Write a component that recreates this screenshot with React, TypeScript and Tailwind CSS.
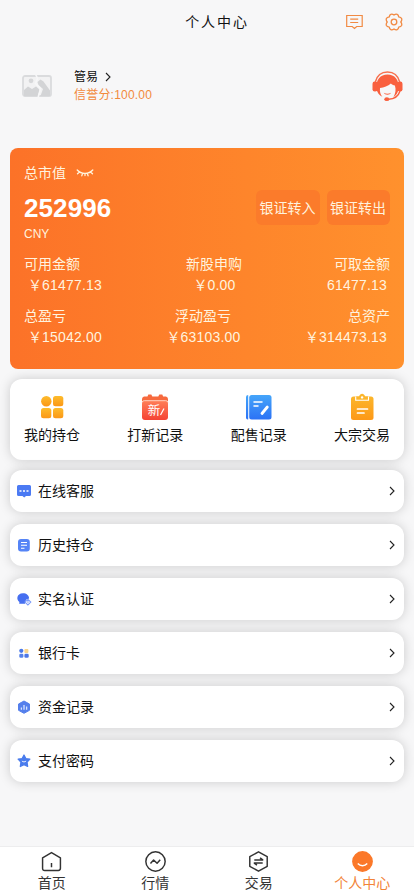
import React from "react";

const Chevron = () => (
  <svg width="6" height="10" viewBox="0 0 6 10" fill="none" stroke="#222" strokeWidth="1.1">
    <path d="M1 1l4 4-4 4" />
  </svg>
);

const EyeClosed = () => (
  <svg width="18" height="10" viewBox="0 0 18 10" fill="none" stroke="#fff3dc" strokeWidth="1.3" strokeLinecap="round">
    <path d="M1.2 2c4 4.400 11.600 4.400 15.600 0M3.200 4.200L1.500 5.800M6.600 5.400L5.800 7.800M11.300 5.400l.8 2.400M14.800 4.200l1.700 1.600M9 5.600v2" />
  </svg>
);

const Agent = () => (
  <svg width="31" height="31" viewBox="0 0 31 31" fill="none">
    <path d="M3.300 11C5 4.500 9.500 1 15.500 1S26 4.500 27.700 11" stroke="#f7714f" strokeWidth="1.500" />
    <path d="M4.500 18C3.500 8.500 8.500 3.500 15.500 3.500S27.500 8.500 26.500 18c-.6 4-2.600 6.500-5 8 2-3.500 2.700-7.500 1.400-11.500-1.700-.2-3-.8-4-2C16 15 12 16.500 8 17c-.5 4 .6 6.500 2.300 8.800C7.300 24.500 5.100 21.500 4.500 18z" fill="#f9603f" />
    <rect x="0.500" y="10.500" width="5" height="10" rx="2.300" fill="#f9603f" />
    <rect x="25.500" y="10.500" width="5" height="10" rx="2.300" fill="#f9603f" />
    <path d="M11.800 21.700c2.300 1.500 5 1.500 7.200 0-.7 2.500-6.300 2.700-7.200 0z" fill="#f9603f" />
    <path d="M28 20c-1.500 5-5.500 8-11.500 8.300" stroke="#f9603f" strokeWidth="1.400" />
    <ellipse cx="14.800" cy="28.200" rx="2.500" ry="1.900" fill="#f9603f" />
  </svg>
);

const GridIcon = () => (
  <svg width="28" height="28" viewBox="0 0 28 28">
    <defs>
      <linearGradient id="amber" x1="0" y1="0" x2="0" y2="1">
        <stop stopColor="#fdbc2c" />
        <stop offset="1" stopColor="#fb9716" />
      </linearGradient>
    </defs>
    <g fill="url(#amber)">
      <circle cx="8.300" cy="8.200" r="5.200" />
      <rect x="15" y="3" width="10.300" height="10.300" rx="2.500" />
      <rect x="3" y="15" width="10.300" height="10.300" rx="2.500" />
      <rect x="15" y="15" width="10.300" height="10.300" rx="2.500" />
    </g>
  </svg>
);

const NewIcon = () => (
  <svg width="28" height="28" viewBox="0 0 28 28">
    <defs>
      <linearGradient id="coral" x1="0" y1="0" x2="0" y2="1">
        <stop stopColor="#ff7f58" />
        <stop offset="1" stopColor="#f54334" />
      </linearGradient>
    </defs>
    <path d="M3 3.500h3.500l.8-2h3l1 2h6l1-2h3l.8 2H25q2 .5 2 2.500v2H1V6q0-2 2-2.500z" fill="#f76a3e" />
    <rect x="1" y="7.500" width="26" height="19.500" rx="3" fill="url(#coral)" />
    <path d="M1.200 9.200q.3-1.500 2-1.500h21.600q1.700 0 2 1.500" fill="none" stroke="#ffd1bf" strokeWidth="1" />
    <text x="13" y="21.800" textAnchor="middle" fontSize="12.500" fill="#fff" fontFamily="'Noto Sans CJK SC', sans-serif">新</text>
    <path d="M19.500 22l3.500-6.500" stroke="#fff" strokeWidth="1.200" />
  </svg>
);

const BookIcon = () => (
  <svg width="28" height="28" viewBox="0 0 28 28">
    <defs>
      <linearGradient id="azure" x1="0" y1="0" x2="0" y2="1">
        <stop stopColor="#45a5fa" />
        <stop offset="1" stopColor="#2b72f5" />
      </linearGradient>
    </defs>
    <path d="M3.200 2v24.500H2.800Q1 26.500 1 24.500V4q0-2 2.200-2z" fill="url(#azure)" />
    <rect x="4.200" y="2" width="22.300" height="24.500" rx="2.500" fill="url(#azure)" />
    <g stroke="#fff" strokeLinecap="round" fill="none">
      <path d="M9 9h8M9 13h4" strokeWidth="1.500" />
      <path d="M17 20.500l5.300-6.500" strokeWidth="2.800" />
    </g>
  </svg>
);

const ClipIcon = () => (
  <svg width="28" height="28" viewBox="0 0 28 28">
    <defs>
      <linearGradient id="amber2" x1="0" y1="0" x2="0" y2="1">
        <stop stopColor="#fcb62b" />
        <stop offset="1" stopColor="#fd9817" />
      </linearGradient>
    </defs>
    <rect x="3" y="3.500" width="22.500" height="23.500" rx="2.500" fill="url(#amber2)" />
    <path d="M7.700 3.500v3.800h12.800V3.500h-3.400c-1-3.800-5-3.800-6 0z" fill="#fcb62b" />
    <path d="M7.700 3.500v3.800h12.800V3.500" fill="none" stroke="#fff" strokeWidth="1.100" />
    <circle cx="14.100" cy="4.400" r="1.200" fill="#fff" />
    <path d="M9.500 16h10M9.500 20h6.500" stroke="#fff" strokeWidth="1.700" strokeLinecap="round" />
  </svg>
);

const menuIcons = [
  <svg key="chat" width="16" height="16" viewBox="0 0 16 16">
    <path d="M2.500 2h11Q15 2 15 3.500v8q0 1.500-1.500 1.500H10l-1.800 1.500L6.500 13h-4Q1 13 1 11.500v-8Q1 2 2.500 2z" fill="#4b7af3" />
    <path d="M3.500 7.900h2M7 7.900h2M10.500 7.900h2" stroke="#fff" strokeWidth="1.500" />
  </svg>,
  <svg key="doc" width="16" height="16" viewBox="0 0 16 16">
    <rect x="2" y="2" width="11.800" height="12.500" rx="3" fill="#5584f6" />
    <path d="M5 5.500h6M5 8.300h6M5 11.200h3.500" stroke="#fff" strokeWidth="1.100" />
  </svg>,
  <svg key="id" width="16" height="16" viewBox="0 0 16 16">
    <path d="M7 2.300c3.500 0 6 2 6.100 5.200L10 8.800l-1 3.900H3.200l.2-1.600C.2 9 .3 2.500 7 2.300z" fill="#466ff0" />
    <path d="M11.900 8.400l2.900 2.700-2.900 2.800L9 11.100z" fill="#fff" stroke="#7d9cf8" strokeWidth="1.100" />
    <path d="M11 11h1.800" stroke="#7d9cf8" />
  </svg>,
  <svg key="card" width="16" height="16" viewBox="0 0 16 16">
    <circle cx="5.300" cy="5.800" r="2.100" fill="#4978e9" />
    <rect x="8.400" y="3.900" width="4" height="4" rx="1" fill="#f8d38b" />
    <rect x="3.300" y="8.700" width="4.100" height="4" rx="1.300" fill="#5681e9" />
    <rect x="8.400" y="8.700" width="4.300" height="4" rx="1.300" fill="#4d77e5" />
  </svg>,
  <svg key="chart" width="16" height="16" viewBox="0 0 16 16">
    <path d="M8 2l5.500 3v6.300L8 14.300l-5.500-3V5z" fill="#547fec" stroke="#547fec" strokeLinejoin="round" />
    <path d="M5.400 8.400v2.300M8 6v4.700M10.600 7.500v3.200" stroke="#d7e3ff" strokeWidth="1.300" />
  </svg>,
  <svg key="star" width="16" height="16" viewBox="0 0 16 16">
    <path d="M8 2l1.900 3.600 4 .6-2.800 3 .6 4.300L8 11.700l-3.700 1.800.6-4.300-2.800-3 4-.6z" fill="#4a7ced" stroke="#4a7ced" strokeWidth="1.200" strokeLinejoin="round" />
    <path d="M5.900 8c1.200 1.200 3 1.200 4.200 0" fill="none" stroke="#fff" strokeWidth="0.900" />
  </svg>,
];

const menu = ["在线客服", "历史持仓", "实名认证", "银行卡", "资金记录", "支付密码"];

const shortcuts = [
  { label: "我的持仓", icon: <GridIcon /> },
  { label: "打新记录", icon: <NewIcon /> },
  { label: "配售记录", icon: <BookIcon /> },
  { label: "大宗交易", icon: <ClipIcon /> },
];

function Stat({ label, value, yen = true, align }: { label: string; value: string; yen?: boolean; align: string }) {
  return (
    <div className={"flex flex-col " + align}>
      <span className="leading-5">{label}</span>
      <span className="flex h-[22px] pl-1 pr-[3px] leading-[22px] tracking-[0.2px]">
        {yen && <span className="w-3.5 font-['Noto_Sans_CJK_SC',sans-serif] leading-5 tracking-normal">￥</span>}
        {value}
      </span>
    </div>
  );
}

const tabs = [
  {
    label: "首页",
    icon: <path d="M10 1.500l8.500 5v10q0 2-2 2h-13q-2 0-2-2v-10zM10 11.500v4" />,
  },
  {
    label: "行情",
    icon: (
      <>
        <circle cx="10" cy="10" r="9.200" />
        <path d="M5.200 11.800l3-3.300 3.300 3.200 3-3.300" />
      </>
    ),
  },
  {
    label: "交易",
    icon: <path d="M10 .8l8.300 4.600v9.200L10 19.200l-8.300-4.600V5.400zM6 8.500h8l-2.500-2M14 11.500H6l2.500 2" />,
  },
  {
    label: "个人中心",
    active: true,
    icon: (
      <>
        <circle cx="10" cy="10" r="9.200" fill="#fb7829" stroke="#fb7829" />
        <path d="M5.500 12c2.500 2.800 6.500 2.800 9 0" stroke="#fff" />
      </>
    ),
  },
];

export default function App() {
  return (
    <div className="flex h-[896px] w-[414px] flex-col overflow-hidden bg-[#f7f7f8] font-['Liberation_Sans','Noto_Sans_CJK_SC',sans-serif] text-sm text-[#111]">
      <header className="grid h-11 shrink-0 grid-cols-[1fr_auto_1fr] items-center px-2.5">
        <span />
        <h1 className="pl-5 tracking-[1.900px]">个人中心</h1>
        <div className="flex items-center justify-end gap-[22px]">
          <svg width="18" height="16" viewBox="0 0 18 16" fill="none" stroke="#f18a43" strokeWidth="1.200">
            <path d="M.7 1.500h15.500v11h-5.500l-2.200 2-2.300-2H.7zM4.200 5.200h8M4.200 8.500h8" />
          </svg>
          <svg width="18" height="18" viewBox="0 0 18 18" fill="none" stroke="#f18a43" strokeWidth="1.300" strokeLinejoin="round" className="-ml-px mr-px">
            <path d="M5.800 1.300Q7.300.7 9 2q1.700-1.300 3.200-.7 1.300.5 1.500 2.600 2.300.4 2.900 1.700.6 1.500-.8 3.400 1.400 1.900.8 3.400-.6 1.300-2.900 1.700-.2 2.100-1.500 2.600-1.500.6-3.200-.7-1.700 1.300-3.200.7-1.300-.5-1.500-2.600-2.300-.4-2.900-1.700Q.8 10.900 2.200 9 .8 7.100 1.400 5.600 2 4.300 4.300 3.900q.2-2.100 1.500-2.600z" />
            <circle cx="9" cy="9" r="2.800" />
          </svg>
        </div>
      </header>

      <section className="flex h-[104px] shrink-0 items-start pl-[22px] pr-[11px] pt-[23px]">
        <svg className="mt-[7px]" width="30" height="24" viewBox="0 0 30 24">
          <rect x="1" y="2" width="28" height="20" rx="2" fill="#f2f2f3" stroke="#dadbdd" strokeWidth="1.800" />
          <circle cx="9" cy="6.800" r="2.400" fill="#d6d7d9" />
          <path d="M2 16l4-3.500 4 2.500 4-2.500 4 3.500-2.500 6H2zM15.500 8l3-2.500 3 2 6.500 9V22h-9.500l2.500-7-4.500-4z" fill="#d3d4d6" />
          <path d="M13.500 0l2 4.500-2 5 5 5L16 24" fill="none" stroke="#f7f7f8" strokeWidth="1.600" />
        </svg>
        <div className="ml-[22px] flex flex-1 flex-col text-xs">
          <div className="flex h-[19px] items-center gap-[7px]">
            <span>管易</span>
            <Chevron />
          </div>
          <span className="leading-[18px] tracking-[0.200px] text-[#f28a3c]">信誉分:100.00</span>
        </div>
        <div className="mt-1">
          <Agent />
        </div>
      </section>

      <section className="mx-2.5 h-[221px] shrink-0 rounded-lg bg-linear-to-r from-[#fc7228] to-[#ff912d] px-3.5 pt-[15px] text-[#fff3df]">
        <div className="flex h-5 items-center gap-2.5">
          <span>总市值</span>
          <EyeClosed />
        </div>
        <div className="flex h-[59px] justify-between">
          <div>
            <div className="mt-2 text-[26px] font-bold leading-[34px] tracking-[0.1px] text-white">252996</div>
            <div className="text-xs leading-[18px]">CNY</div>
          </div>
          <div className="mt-[7px] flex gap-[7px]">
            <button className="-ml-px h-[35px] w-16 rounded-md bg-[#fb7b2b] pr-px">银证转入</button>
            <button className="h-[35px] w-[63px] rounded-md bg-[#fb7b2b] pr-px">银证转出</button>
          </div>
        </div>
        <div className="mt-3 flex justify-between">
          <Stat label="可用金额" value="61477.13" align="items-start" />
          <Stat label="新股申购" value="0.00" align="items-center" />
          <Stat label="可取金额" value="61477.13" yen={false} align="items-end" />
        </div>
        <div className="mt-2.5 flex justify-between">
          <Stat label="总盈亏" value="15042.00" align="items-start" />
          <Stat label="浮动盈亏" value="63103.00" align="items-center" />
          <Stat label="总资产" value="314473.13" align="items-end" />
        </div>
      </section>

      <section className="mx-2.5 mt-2.5 flex h-[81px] shrink-0 justify-between rounded-xl bg-white px-3.5 pt-3.5 shadow-[0_0_12px_rgba(0,0,0,0.18)]">
        {shortcuts.map((s) => (
          <div key={s.label} className="flex flex-col items-center">
            {s.icon}
            <span className="mt-1 leading-5">{s.label}</span>
          </div>
        ))}
      </section>

      <nav className="mx-2.5 mt-2.5 flex flex-col gap-3">
        {menu.map((m, i) => (
          <div key={m} className="flex h-[42px] items-center rounded-xl bg-white pl-1.5 pr-[9px] shadow-[0_0_12px_rgba(0,0,0,0.18)]">
            {menuIcons[i]}
            <span className="ml-1.5 flex-1">{m}</span>
            <Chevron />
          </div>
        ))}
      </nav>

      <footer className="mt-auto grid h-[50px] shrink-0 grid-cols-4 border-t border-[#ededee] bg-white pt-1 text-[#333]">
        {tabs.map((t) => (
          <div key={t.label} className={"flex flex-col items-center " + (t.active ? "text-[#f28338]" : "")}>
            <svg width="21" height="21" viewBox="0 0 20 20" fill="none" stroke="#333" strokeWidth="1.400" strokeLinejoin="round">
              {t.icon}
            </svg>
            <span className="leading-[22px]">{t.label}</span>
          </div>
        ))}
      </footer>
    </div>
  );
}
